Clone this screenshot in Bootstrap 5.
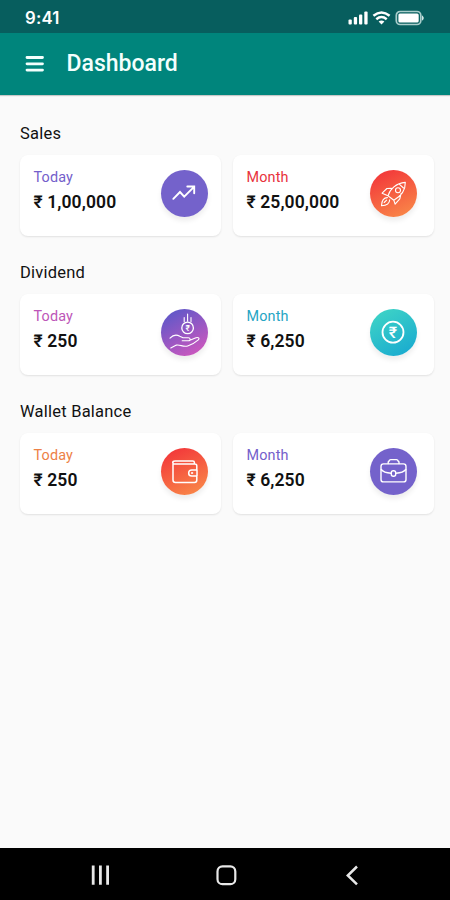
<!DOCTYPE html>
<html lang="en">
<head>
<meta charset="utf-8">
<meta name="viewport" content="width=device-width, initial-scale=1">
<title>Dashboard</title>
<link href="https://cdn.jsdelivr.net/npm/bootstrap@5.3.0/dist/css/bootstrap.min.css" rel="stylesheet">
<style>
body{font-family:Roboto,sans-serif;background:#fafafa;color:#111;height:900px;overflow:hidden}
svg{display:block;flex:none}
.status{height:33px;background:#075e5e;padding:3px 25px 0;color:#fff}
.status svg{margin-top:6px}
.clock{font:600 16.8px/31px Inter,sans-serif;letter-spacing:.15px}
.topbar{height:62px;background:#00857c;padding:0 25px;gap:21.5px;box-shadow:0 1px 1px #0003}
.topbar h1{font-size:23px;font-weight:500;line-height:28px;color:#f3fffd;padding-bottom:1px}
main{padding:27px 16px 0 20px}
section{height:139px}
h2{font-size:16.5px;line-height:24px;font-weight:400;letter-spacing:.22px;margin-bottom:9px}
.tiles{display:grid;grid-template-columns:201px 201px;gap:12px}
.tile{height:81px;border:0;border-radius:8px;box-shadow:0 1px 2px #0000001a;padding:14px 13px 0 13.5px}
.tile.wide{padding-right:17.5px}
.period{font-size:14.4px;line-height:17px;letter-spacing:.15px}
.amount{font-size:17.5px;line-height:24px;font-weight:600;margin-top:4px;letter-spacing:.1px;white-space:nowrap}
.disc{width:47px;height:47px;border-radius:50%;margin-top:1px;box-shadow:0 4px 5px #00000012;flex:none}
.disc svg{fill:none;stroke:#fff;stroke-width:1.3;stroke-linecap:round;stroke-linejoin:round}
.violet{background:#7462cb}
.flame{background:linear-gradient(155deg,#f33d3b 15%,#f98a49 95%)}
.orchid{background:linear-gradient(150deg,#6658c8 15%,#d357bd 95%)}
.aqua{background:linear-gradient(150deg,#3bd0c7 15%,#18a9d0 95%)}
.t-violet{color:#7460cb}.t-red{color:#e8333c}.t-orchid{color:#bd56b8}.t-aqua{color:#26a5c4}.t-orange{color:#ed8146}
.glyph{font:500 8.5px Roboto,sans-serif;fill:#fff;stroke:none;text-anchor:middle}
.glyph.big{font-size:16px}
.sysnav{height:52px;background:#000}
</style>
<script src="https://cdn.jsdelivr.net/npm/bootstrap@5.3.0/dist/js/bootstrap.bundle.min.js"></script>
</head>
<body class="d-flex flex-column">
<div class="status d-flex justify-content-between">
  <span class="clock">9:41</span>
  <svg width="78" height="18" viewBox="0 0 78 18" fill="#fff">
    <rect x="1.5" y="10.5" width="3.3" height="5" rx="1"/><rect x="6.8" y="8" width="3.3" height="7.5" rx="1"/><rect x="12" y="5.5" width="3.3" height="10" rx="1"/><rect x="17.3" y="2.5" width="3.3" height="13" rx="1"/>
    <g fill="none" stroke="#fff" stroke-width="2.5"><path d="M26.4 6.8q8.1-6.6 16.2 0"/><path d="M29.3 10.2q5.2-4.3 10.4 0"/></g><path d="M31.6 12.5q2.9-2.2 5.8 0l-2.9 3z"/>
    <rect x="49.3" y="2.5" width="24.5" height="13" rx="3.8" fill="none" stroke="#a9cdcb" stroke-width="1.7"/><rect x="51.4" y="4.6" width="20.3" height="8.8" rx="1.5"/><path d="M75 6.2q3.6 2.8 0 5.6z" fill="#d5e7e6"/>
  </svg>
</div>
<header class="topbar d-flex align-items-center">
  <svg width="20" height="18" viewBox="0 0 20 18" stroke="#f3fffd" stroke-width="2.8" stroke-linecap="round"><path d="M2 2.5h15.5M2 8.8h15.5M2 15.1h15.5"/></svg>
  <h1 class="mb-0">Dashboard</h1>
</header>
<main class="flex-grow-1">
  <section>
    <h2>Sales</h2>
    <div class="tiles">
      <div class="card tile flex-row justify-content-between">
        <div><div class="period t-violet">Today</div><div class="amount">₹ 1,00,000</div></div>
        <div class="disc violet"><svg width="47" height="47" viewBox="0 0 47 47"><path stroke-width="1.9" stroke-linejoin="miter" d="M12.3 28.8l6.7-6.8 4.2 4.6 9.8-9.8M26.3 16.5h6.9v6.8"/></svg></div>
      </div>
      <div class="card tile wide flex-row justify-content-between">
        <div><div class="period t-red">Month</div><div class="amount">₹ 25,00,000</div></div>
        <div class="disc flame"><svg width="47" height="47" viewBox="0 0 47 47"><path stroke-width="1.1" d="M18 25.8C20 19 26 13.2 35.3 12.4c.2 7.6-4.8 13.9-11.5 17.8zM21.4 18.3l-4.5.2-4.8 4.7 5.9 2.6M31 23.6l-1.2 5.2-4.7 5.4-1.3-4M18 25.8l5.8 4.4M17.4 27.6c-3.4-.1-5.8 2.9-5.9 8.1 4.8-.2 8.1-2.5 8.2-6M14.2 32.5l2.4-2.4M29.5 14.4l4 3.6"/><circle cx="28" cy="20.3" r="2.5" stroke-width="1.1"/></svg></div>
      </div>
    </div>
  </section>
  <section>
    <h2>Dividend</h2>
    <div class="tiles">
      <div class="card tile flex-row justify-content-between">
        <div><div class="period t-orchid">Today</div><div class="amount">₹ 250</div></div>
        <div class="disc orchid"><svg width="47" height="47" viewBox="0 0 47 47"><path stroke-width="1.1" d="M23.2 8.5v4.2M26.6 5v7.3M30 8.5v4.2M9 29.2c3.2-3.5 6.6-3.8 9.8-2l3.2 1.6h5.3c2.3 0 2.5 3 .2 3h-6.3M28.2 31.4l6.8-2.7c2.2-.8 4 .6 2.3 2.1-3.2 2.9-7 4.8-10.6 6.1-4.4 1.5-7.6-1.6-11.3-.8L9.8 39"/><circle cx="26.6" cy="18.9" r="5.8"/><text class="glyph" x="26.7" y="22">₹</text></svg></div>
      </div>
      <div class="card tile wide flex-row justify-content-between">
        <div><div class="period t-aqua">Month</div><div class="amount">₹ 6,250</div></div>
        <div class="disc aqua"><svg width="47" height="47" viewBox="0 0 47 47"><circle cx="23" cy="23.2" r="10.5" stroke-width="1.8"/><text class="glyph big" x="23" y="29">₹</text></svg></div>
      </div>
    </div>
  </section>
  <section>
    <h2>Wallet Balance</h2>
    <div class="tiles">
      <div class="card tile flex-row justify-content-between">
        <div><div class="period t-orange">Today</div><div class="amount">₹ 250</div></div>
        <div class="disc flame"><svg width="47" height="47" viewBox="0 0 47 47"><path stroke-width="1.5" d="M35.8 21.3v-3.2c0-1.3-.8-2-2-2H14c-3 0-3-3.2 0-3.2h17.8q1.6 0 1.6 1.6v1.4M12 14.6v17.5c0 1.6.9 2.5 2.5 2.5h19c1.6 0 2.3-.9 2.3-2.5v-4M36 21.9h-5.2c-4.2 0-4.2 6.2 0 6.2H36z"/><circle cx="31" cy="25" r=".7" fill="#fff" stroke-width=".7"/></svg></div>
      </div>
      <div class="card tile wide flex-row justify-content-between">
        <div><div class="period t-violet">Month</div><div class="amount">₹ 6,250</div></div>
        <div class="disc violet"><svg width="47" height="47" viewBox="0 0 47 47"><g stroke-width="1.4"><rect x="11" y="15.9" width="25" height="18" rx="2.5"/><path d="M18.2 15.5v-1.3q0-.8.8-1l.6-1q.3-.6 1.2-.6h5.6q.9 0 1.2.6l.6 1q.8.2.8 1v1.3M11.2 21.5c2 2.7 5.6 3.5 9.8 3.7M26 25.2c4.2-.2 7.8-1 9.8-3.7"/><rect x="21.3" y="22.7" width="4.4" height="5.6" rx="2"/></g></svg></div>
      </div>
    </div>
  </section>
</main>
<footer class="sysnav">
  <svg width="450" height="52" viewBox="0 0 450 52" fill="none" stroke="#e8e8e8"><path stroke-width="2.8" d="M93.2 17.5v19.3M100.4 17.5v19.3M107.6 17.5v19.3"/><rect x="217.5" y="18.4" width="17.8" height="17.8" rx="5" stroke-width="2.2"/><path stroke-width="2.5" d="M357 18.5L347.8 27.5l9.2 8.9"/></svg>
</footer>
</body>
</html>
